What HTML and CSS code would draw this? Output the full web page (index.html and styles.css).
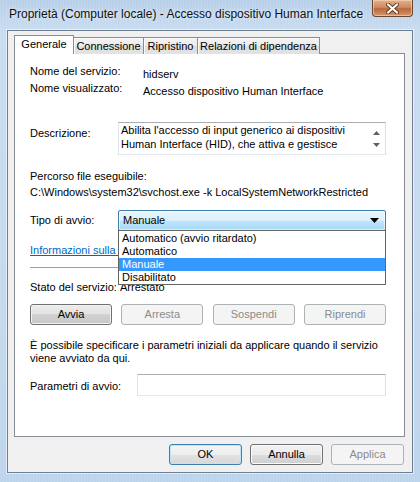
FILE: index.html
```html
<!DOCTYPE html>
<html lang="it">
<head>
<meta charset="utf-8">
<title>Proprietà</title>
<link rel="stylesheet" href="styles.css">
</head>
<body>
<div class="window">
  <div class="titlebar">
    <span class="title">Proprietà (Computer locale) - Accesso dispositivo Human Interface</span>
    <div class="close">
      <svg width="15" height="11" viewBox="0 0 15 11">
        <path d="M3 1.5 L12 9.5 M12 1.5 L3 9.5" stroke="#5a3a26" stroke-width="4" stroke-linecap="round"/>
        <path d="M3 1.5 L12 9.5 M12 1.5 L3 9.5" stroke="#ffffff" stroke-width="2.2" stroke-linecap="round"/>
      </svg>
    </div>
  </div>
  <div class="client">
    <div class="tabs">
      <div class="tab active w-gen">Generale</div>
      <div class="tab w-con">Connessione</div>
      <div class="tab w-rip">Ripristino</div>
      <div class="tab w-rel">Relazioni di dipendenza</div>
    </div>
    <div class="panel">
      <div class="info-row first">
        <span>Nome del servizio:</span>
        <span class="value">hidserv</span>
      </div>
      <div class="info-row">
        <span>Nome visualizzato:</span>
        <span class="value">Accesso dispositivo Human Interface</span>
      </div>
      <div class="desc-row">
        <span class="desc-label">Descrizione:</span>
        <div class="textbox">
          <div class="textbox-text">Abilita l'accesso di input generico ai dispositivi<br>Human Interface (HID), che attiva e gestisce</div>
          <div class="scrollbar">
            <svg width="7" height="4" viewBox="0 0 7 4"><path d="M0 4 L3.5 0 L7 4 Z" fill="#606060"/></svg>
            <svg width="7" height="4" viewBox="0 0 7 4"><path d="M0 0 L7 0 L3.5 4 Z" fill="#606060"/></svg>
          </div>
        </div>
      </div>
      <div class="path-label">Percorso file eseguibile:</div>
      <div class="path-value">C:\Windows\system32\svchost.exe -k LocalSystemNetworkRestricted</div>
      <div class="startup-row">
        <span class="startup-label">Tipo di avvio:</span>
        <div class="combo-wrap">
          <div class="combo">
            <span>Manuale</span>
            <svg width="9" height="5" viewBox="0 0 9 5"><path d="M0 0 L9 0 L4.5 5 Z" fill="#000"/></svg>
          </div>
          <ul class="dropdown">
            <li>Automatico (avvio ritardato)</li>
            <li>Automatico</li>
            <li class="selected">Manuale</li>
            <li>Disabilitato</li>
          </ul>
        </div>
      </div>
      <a class="link" href="#">Informazioni sulla configurazione delle opzioni di avvio</a>
      <div class="separator"></div>
      <div class="status-row">
        <span>Stato del servizio:</span>
        <span>Arrestato</span>
      </div>
      <div class="service-buttons">
        <button class="btn focused">Avvia</button>
        <button class="btn" disabled>Arresta</button>
        <button class="btn" disabled>Sospendi</button>
        <button class="btn" disabled>Riprendi</button>
      </div>
      <p class="note">È possibile specificare i parametri iniziali da applicare quando il servizio viene avviato da qui.</p>
      <div class="params-row">
        <span class="params-label">Parametri di avvio:</span>
        <div class="input"></div>
      </div>
    </div>
    <div class="footer">
      <button class="btn default">OK</button>
      <button class="btn">Annulla</button>
      <button class="btn" disabled>Applica</button>
    </div>
  </div>
</div>
</body>
</html>
```
FILE: styles.css
```css
* { box-sizing: border-box; }
html, body { margin: 0; padding: 0; }
body {
  font-family: "Liberation Sans", Arial, sans-serif;
  font-size: 11px;
  line-height: 13px;
  color: #000;
  background: #c4d9ee;
}
.window {
  width: 420px;
  height: 482px;
  display: flex;
  flex-direction: column;
  background:
    repeating-linear-gradient(90deg, rgba(255,255,255,0.10) 0 1px, transparent 1px 3px),
    linear-gradient(180deg, #b7cfe8 0px, #c8dcf0 30px, #c4d9ee 60%, #bcd4ec 100%);
}
.titlebar {
  height: 30px;
  flex: none;
  display: flex;
  justify-content: space-between;
  align-items: flex-start;
  padding-left: 9px;
}
.title {
  font-size: 12px;
  line-height: 16px;
  margin-top: 6px;
  color: #111;
  white-space: nowrap;
  text-shadow: 0 0 5px rgba(255,255,255,0.9);
}
.close {
  width: 41px;
  height: 17px;
  margin-right: 7px;
  border: 1px solid #6b4630;
  border-top: none;
  border-radius: 0 0 4px 4px;
  background: linear-gradient(180deg, #e2b08c 0%, #cf8c5e 45%, #b8683b 55%, #d6976a 100%);
  box-shadow: inset 0 0 0 1px rgba(255,230,200,0.5);
  display: flex;
  align-items: center;
  justify-content: center;
}
.client {
  margin: 0 7px;
  height: 443px;
  border: 1px solid #6e7f91;
  box-shadow: 0 0 0 1px rgba(255,255,255,0.55);
  background: #f0f0f0;
  padding: 4px 0 0 6px;
}
.tabs {
  display: flex;
  align-items: flex-end;
  height: 19px;
  position: relative;
  z-index: 1;
  margin-bottom: -1px;
}
.tab {
  height: 17px;
  border: 1px solid #898c95;
  border-bottom: none;
  background: linear-gradient(180deg, #f3f3f3 0%, #ebebeb 50%, #dedede 50%, #e3e3e3 100%);
  box-shadow: inset 1px 1px 0 #fcfcfc;
  text-align: center;
  line-height: 15px;
  padding-top: 1px;
  white-space: nowrap;
  margin-left: -1px;
}
.tab.active {
  height: 19px;
  background: #fff;
  box-shadow: none;
  line-height: 15px;
  padding-top: 1px;
  margin-left: 0;
}
.w-gen { width: 60px; }
.w-con { width: 71px; }
.w-rip { width: 55px; }
.w-rel { width: 123px; }
.panel {
  width: 391px;
  height: 384px;
  border: 1px solid #898c95;
  background: #fff;
  padding: 11px 17px 0 15px;
  display: flex;
  flex-direction: column;
}
.info-row {
  display: grid;
  grid-template-columns: 113px 1fr;
  height: 17px;
  white-space: nowrap;
}
.info-row .value { padding-top: 3px; }
.desc-row {
  margin-top: 23px;
  display: grid;
  grid-template-columns: 88px 268px;
  height: 33px;
}
.desc-label { padding-top: 5px; }
.textbox {
  height: 33px;
  border: 1px solid #abadb3;
  border-color: #abadb3 #dbdfe6 #e3e9ef #e2e3ea;
  display: flex;
}
.textbox-text {
  flex: 1;
  padding: 0 2px 0 2px;
  line-height: 14px;
  white-space: nowrap;
}
.scrollbar {
  width: 17px;
  flex: none;
  display: flex;
  flex-direction: column;
  justify-content: space-around;
  align-items: center;
  padding: 4px 0 3px;
}
.path-label { margin-top: 15px; }
.path-value { margin-top: 3px; white-space: nowrap; }
.startup-row {
  margin-top: 11px;
  display: grid;
  grid-template-columns: 88px 268px;
  height: 21px;
}
.startup-label { padding-top: 4px; }
.combo-wrap { position: relative; }
.combo {
  height: 21px;
  border: 1px solid #3c7fb1;
  border-radius: 2px;
  background: linear-gradient(180deg, #eaf6fd 0%, #d9f0fc 50%, #bee6fd 50%, #a7d9f5 100%);
  box-shadow: inset 0 0 0 1px rgba(255,255,255,0.6);
  display: flex;
  align-items: center;
  justify-content: space-between;
  padding: 0 6px 0 4px;
}
.dropdown {
  position: absolute;
  top: 20px;
  left: 0;
  width: 268px;
  margin: 0;
  padding: 1px 0 0;
  list-style: none;
  background: #fff;
  border: 1px solid #646464;
  z-index: 2;
}
.dropdown li {
  height: 13px;
  line-height: 13px;
  padding-left: 3px;
  white-space: nowrap;
}
.dropdown li.selected { background: #3399ff; color: #fff; }
.link {
  margin-top: 13px;
  color: #0066cc;
  text-decoration: underline;
  white-space: nowrap;
  align-self: flex-start;
}
.separator {
  margin-top: 10px;
  height: 1px;
  width: 356px;
  background: #a0a0a0;
}
.status-row {
  margin-top: 13px;
  display: grid;
  grid-template-columns: 90px 1fr;
}
.service-buttons {
  margin-top: 10px;
  display: flex;
  justify-content: space-between;
  width: 356px;
}
.service-buttons .btn { width: 82px; }
.btn {
  font-family: inherit;
  font-size: 11px;
  line-height: 13px;
  height: 21px;
  padding: 0;
  color: #000;
  border: 1px solid #707070;
  border-radius: 3px;
  background: linear-gradient(180deg, #f2f2f2 0%, #ebebeb 50%, #dddddd 50%, #cfcfcf 100%);
  box-shadow: inset 0 0 0 1px #fbfbfb;
}
.btn.focused {
  background: linear-gradient(180deg, #ececec 0%, #e2e2e2 50%, #d2d2d2 50%, #c6c6c6 100%);
  box-shadow: inset 0 0 0 1px #f4f4f4;
}
.btn:disabled {
  color: #8b8b8b;
  border-color: #adb2b5;
  background: #f4f4f4;
  box-shadow: none;
}
.btn.default {
  border-color: #3c7fb1;
  background: linear-gradient(180deg, #f4f4f4 0%, #eeeeee 50%, #e2e2e2 50%, #d8d8d8 100%);
  box-shadow: inset 0 0 0 1px #bfe6f8;
}
.note {
  margin: 14px 0 0;
  width: 356px;
  line-height: 12.5px;
}
.params-row {
  margin-top: 10px;
  display: grid;
  grid-template-columns: 107px 249px;
  height: 22px;
}
.params-label { padding-top: 6px; }
.input {
  height: 22px;
  border: 1px solid #abadb3;
  border-color: #abadb3 #dbdfe6 #e3e9ef #e2e3ea;
  background: #fff;
}
.footer {
  margin-top: 7px;
  display: flex;
  justify-content: flex-end;
  gap: 8px;
  padding-right: 8px;
}
.footer .btn { width: 73px; }
```
